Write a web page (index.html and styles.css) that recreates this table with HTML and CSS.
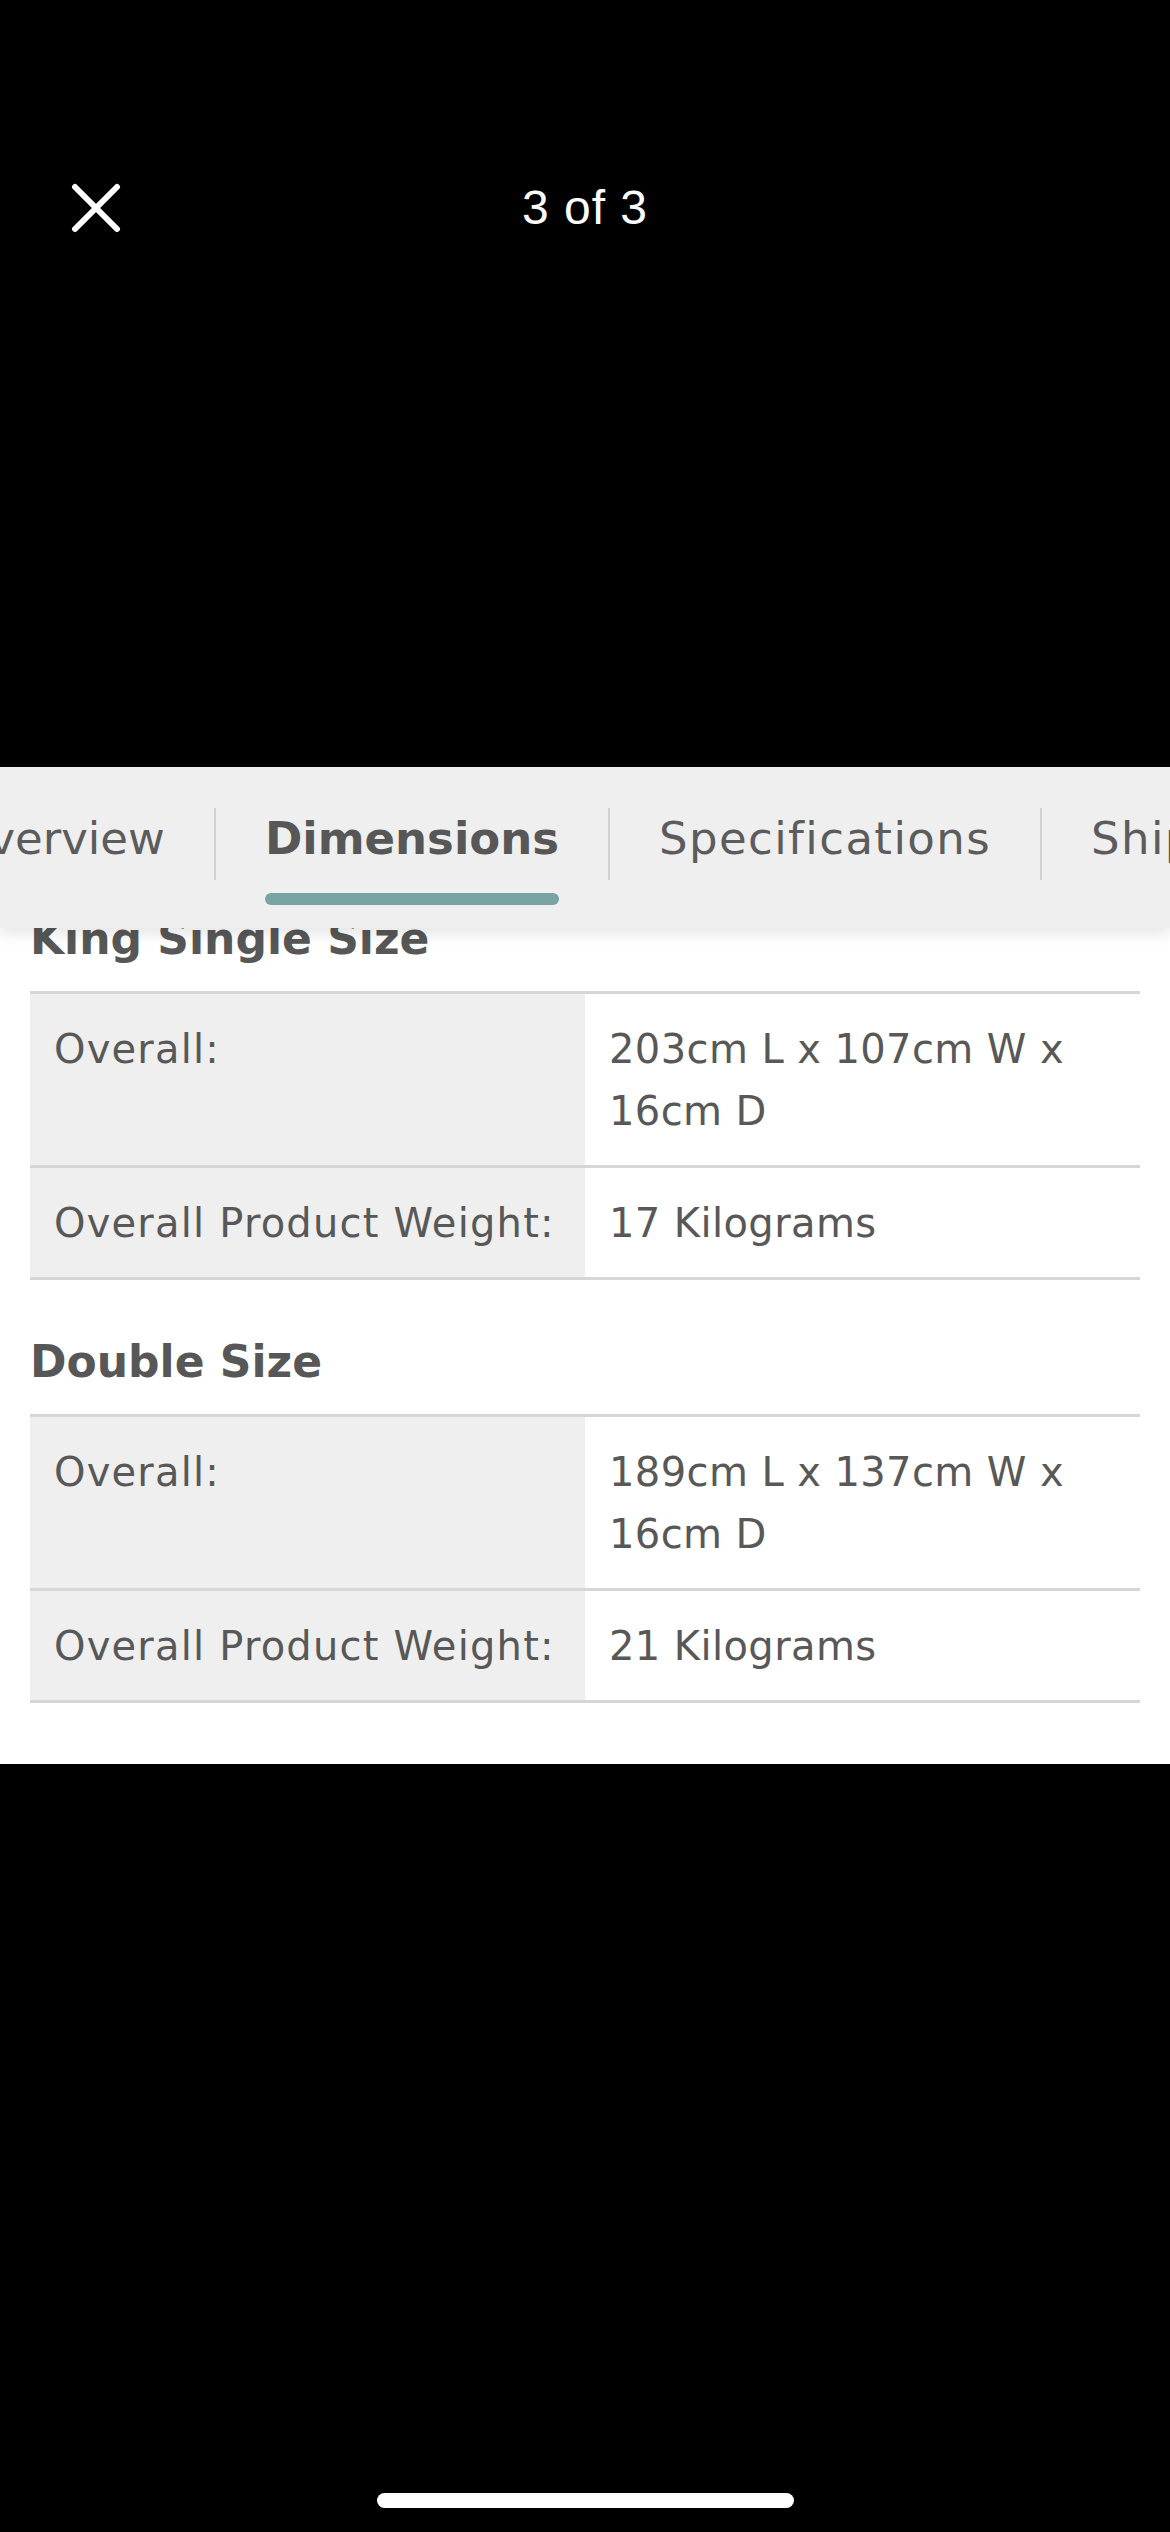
FILE: index.html
```html
<!DOCTYPE html>
<html lang="en">
<head>
<meta charset="utf-8">
<title>3 of 3</title>
<link rel="stylesheet" href="styles.css">
</head>
<body>
<div class="viewer">
  <header class="header">
    <div class="header-left">
      <button class="close" aria-label="Close">
        <svg width="50" height="50" viewBox="0 0 50 50" aria-hidden="true">
          <path d="M4 4 L46 46 M46 4 L4 46" stroke="#fff" stroke-width="6" stroke-linecap="round" fill="none"/>
        </svg>
      </button>
    </div>
    <div class="counter">3 of 3</div>
    <div class="header-right"></div>
  </header>

  <section class="photo">
    <nav class="tabs">
      <div class="tab-row">
        <div class="tab tab-first"><span class="tab-label">Overview</span></div>
        <div class="divider"></div>
        <div class="tab active"><span class="tab-label">Dimensions</span><span class="tab-underline"></span></div>
        <div class="divider"></div>
        <div class="tab"><span class="tab-label">Specifications</span></div>
        <div class="divider"></div>
        <div class="tab"><span class="tab-label">Shipping</span></div>
      </div>
    </nav>
    <div class="content">
      <div class="scroll">
        <h3 class="size-title first">King Single Size</h3>
        <table class="dims">
          <tr>
            <th>Overall:</th>
            <td>203cm L x 107cm W x 16cm D</td>
          </tr>
          <tr>
            <th>Overall Product Weight:</th>
            <td>17 Kilograms</td>
          </tr>
        </table>
        <h3 class="size-title">Double Size</h3>
        <table class="dims">
          <tr>
            <th>Overall:</th>
            <td>189cm L x 137cm W x 16cm D</td>
          </tr>
          <tr>
            <th>Overall Product Weight:</th>
            <td>21 Kilograms</td>
          </tr>
        </table>
        <h3 class="size-title">Queen Size</h3>
      </div>
    </div>
  </section>

  <div class="home-bar"><span class="home-indicator"></span></div>
</div>
</body>
</html>
```

FILE: styles.css
```css
* { box-sizing: border-box; }

html, body {
  margin: 0;
  padding: 0;
  background: #000;
}

.viewer {
  width: 1170px;
  height: 2532px;
  display: flex;
  flex-direction: column;
  background: #000;
  overflow: hidden;
}

/* Header */
.header {
  margin-top: 163px;
  height: 90px;
  display: grid;
  grid-template-columns: 1fr auto 1fr;
  align-items: center;
}

.header-left {
  padding-left: 71px;
  display: flex;
  align-items: center;
}

.close {
  width: 50px;
  height: 50px;
  padding: 0;
  margin: 0;
  border: 0;
  background: transparent;
  display: block;
}

.close svg { display: block; }

.counter {
  font-family: "Liberation Sans", Arial, sans-serif;
  font-size: 48px;
  letter-spacing: 1px;
  color: #fff;
  line-height: 56px;
}

/* Photo panel */
.photo {
  margin-top: 514px;
  height: 997px;
  display: flex;
  flex-direction: column;
  background: #fff;
  overflow: hidden;
}

.tabs {
  position: relative;
  z-index: 1;
  height: 161px;
  flex: none;
  background: #efefef;
  box-shadow: 0 6px 14px rgba(0, 0, 0, 0.10);
  overflow: hidden;
}

.tab-row {
  display: flex;
  align-items: flex-start;
  margin-left: -96px;
  white-space: nowrap;
}

.tab {
  flex: none;
  padding: 45px 49px 0;
  display: flex;
  flex-direction: column;
  align-items: stretch;
}

.tab-label {
  font-family: "DejaVu Sans", sans-serif;
  font-size: 45px;
  line-height: 54px;
  letter-spacing: 1.4px;
  color: #5c5c5c;
}

.tab-first .tab-label {
  letter-spacing: 0;
}

.tab.active .tab-label {
  font-weight: bold;
  letter-spacing: 0;
  color: #575757;
}

.tab-underline {
  display: block;
  height: 12px;
  margin-top: 27px;
  border-radius: 6px;
  background: #79a4a1;
}

.divider {
  flex: none;
  width: 2px;
  height: 72px;
  margin-top: 41px;
  background: #d2d2d2;
}

/* Content */
.content {
  flex: 1;
  overflow: hidden;
  padding: 0 30px;
  background: #fff;
}

.scroll {
  margin-top: -16px;
}

.size-title {
  font-family: "DejaVu Sans", sans-serif;
  font-weight: bold;
  font-size: 44px;
  line-height: 53px;
  color: #575757;
  margin: 55px 0 26px;
}

.size-title.first {
  margin-top: 0;
}

.dims {
  width: 100%;
  border-collapse: collapse;
  table-layout: fixed;
  border-top: 3px solid #d6d6d6;
}

.dims tr {
  border-bottom: 3px solid #d6d6d6;
}

.dims th,
.dims td {
  width: 50%;
  padding: 24px 24px 23px;
  text-align: left;
  vertical-align: top;
  font-family: "DejaVu Sans", sans-serif;
  font-weight: normal;
  font-size: 40px;
  line-height: 62px;
  color: #585858;
}

.dims th {
  background: #efefef;
  letter-spacing: 1.2px;
}

.dims td {
  background: #fff;
  letter-spacing: 0.4px;
}

/* Home indicator */
.home-bar {
  flex: 1;
  display: flex;
  align-items: flex-end;
  justify-content: center;
  padding-bottom: 24px;
}

.home-indicator {
  display: block;
  width: 417px;
  height: 15px;
  border-radius: 8px;
  background: #fff;
}
```
